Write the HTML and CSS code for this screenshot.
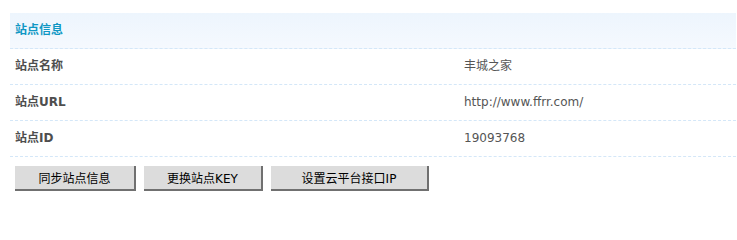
FILE: index.html
```html
<!DOCTYPE html>
<html lang="zh-CN">
<head>
<meta charset="utf-8">
<title>站点信息</title>
<link rel="stylesheet" href="styles.css">
</head>
<body>
<div class="panel">
  <div class="head">站点信息</div>
  <div class="row"><div class="label">站点名称</div><div class="value">丰城之家</div></div>
  <div class="row"><div class="label">站点URL</div><div class="value">http://www.ffrr.com/</div></div>
  <div class="row"><div class="label">站点ID</div><div class="value">19093768</div></div>
  <div class="actions">
    <button class="btn btn-sync">同步站点信息</button>
    <button class="btn btn-key">更换站点KEY</button>
    <button class="btn btn-ip">设置云平台接口IP</button>
  </div>
</div>
</body>
</html>
```
FILE: styles.css
```css
html, body {
  margin: 0;
  padding: 0;
  background: #fff;
}
body {
  padding: 13px 1px 0 10px;
  font-family: "DejaVu Sans", "Noto Sans CJK SC", sans-serif;
  font-size: 12px;
}
.panel {
  display: flex;
  flex-direction: column;
}
.head {
  height: 35px;
  line-height: 35px;
  padding-left: 5px;
  background: linear-gradient(#edf5fd, #f5f9fe);
  border-bottom: 1px dashed #d4e7f8;
  color: #0f97c4;
  font-weight: bold;
}
.row {
  display: grid;
  grid-template-columns: 449px 1fr;
  height: 35px;
  line-height: 35px;
  border-bottom: 1px dashed #d4e7f8;
}
.label {
  padding-left: 5px;
  color: #4e4e4e;
  font-weight: bold;
}
.value {
  padding-left: 5px;
  color: #555;
}
.actions {
  display: flex;
  gap: 8px;
  padding: 9px 0 0 5px;
}
.btn {
  height: 25px;
  padding: 0;
  margin: 0;
  background: #dcdcdc;
  border: none;
  border-right: 2px solid #707070;
  border-bottom: 2px solid #707070;
  font-family: "DejaVu Sans", "Noto Sans CJK SC", sans-serif;
  font-size: 12px;
  color: #000;
}
.btn-sync { width: 121px; }
.btn-key { width: 119px; }
.btn-ip { width: 158px; }
```
